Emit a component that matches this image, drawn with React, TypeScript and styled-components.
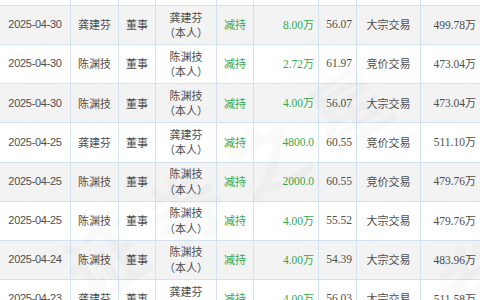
import React from "react";
import styled, { createGlobalStyle } from "styled-components";

const GlobalStyle = createGlobalStyle`
  html, body { margin: 0; padding: 0; background: #ffffff; overflow: hidden; }
  * { box-sizing: border-box; }
`;

const COLS = "71px 48px 37px 61px 37px 65px 38px 64px 60px";
const BORDER = "#d3e2f2";
const TEXT = "#4e4e4e";
const GREEN = "#36a94f";
const CJK = `"Noto Sans CJK SC", "Liberation Sans", sans-serif`;

const Viewport = styled.div`
  position: relative;
  width: 480px;
  height: 300px;
  overflow: hidden;
  background: #fff;
`;

const Body = styled.div`
  margin-top: -33.15px;
  width: 481px;
`;

const Row = styled.div<{ $alt: boolean }>`
  display: grid;
  grid-template-columns: ${COLS};
  height: 39.15px;
  background: ${(p) => (p.$alt ? "#f3f3f3" : "#ffffff")};
`;

const Cell = styled.div<{ $align?: "center" | "right" }>`
  display: flex;
  flex-direction: column;
  justify-content: center;
  align-items: ${(p) => (p.$align === "right" ? "flex-end" : "center")};
  padding: 0 4px;
  border-right: 1px solid ${BORDER};
  border-bottom: 1px solid ${BORDER};
  font-family: ${CJK};
  font-size: 11px;
  line-height: 15.5px;
  color: ${TEXT};
  white-space: nowrap;
  overflow: hidden;
`;

const DateText = styled.span`
  font-family: "Liberation Sans", Arial, sans-serif;
  font-size: 11px;
  letter-spacing: -0.3px;
`;

const Num = styled.span<{ $green?: boolean }>`
  font-family: "Liberation Serif", "Noto Sans CJK SC", serif;
  font-size: 11.5px;
  color: ${(p) => (p.$green ? GREEN : TEXT)};
`;

const Unit = styled.span`
  font-family: ${CJK};
  font-size: 11px;
`;

const Action = styled.span`
  color: ${GREEN};
`;

const Watermark = styled.div<{ $x: number; $y: number }>`
  position: absolute;
  left: ${(p) => p.$x}px;
  top: ${(p) => p.$y}px;
  transform: rotate(-32deg);
  transform-origin: left top;
  font-family: ${CJK};
  font-size: 78px;
  font-weight: 700;
  letter-spacing: 18px;
  color: rgba(0, 0, 0, 0.02);
  white-space: nowrap;
  pointer-events: none;
`;

type Trade = {
  date: string;
  name: string;
  role: string;
  relation: string;
  action: string;
  amount: string;
  price: string;
  kind: string;
  holding: string;
};

const trades: Trade[] = [
  { date: "2025-05-06", name: "陈渊技", role: "董事", relation: "陈渊技", action: "减持", amount: "2.00万", price: "57.10", kind: "竞价交易", holding: "499.78万" },
  { date: "2025-04-30", name: "龚建芬", role: "董事", relation: "龚建芬", action: "减持", amount: "8.00万", price: "56.07", kind: "大宗交易", holding: "499.78万" },
  { date: "2025-04-30", name: "陈渊技", role: "董事", relation: "陈渊技", action: "减持", amount: "2.72万", price: "61.97", kind: "竞价交易", holding: "473.04万" },
  { date: "2025-04-30", name: "陈渊技", role: "董事", relation: "陈渊技", action: "减持", amount: "4.00万", price: "56.07", kind: "大宗交易", holding: "473.04万" },
  { date: "2025-04-25", name: "龚建芬", role: "董事", relation: "龚建芬", action: "减持", amount: "4800.0", price: "60.55", kind: "竞价交易", holding: "511.10万" },
  { date: "2025-04-25", name: "陈渊技", role: "董事", relation: "陈渊技", action: "减持", amount: "2000.0", price: "60.55", kind: "竞价交易", holding: "479.76万" },
  { date: "2025-04-25", name: "陈渊技", role: "董事", relation: "陈渊技", action: "减持", amount: "4.00万", price: "55.52", kind: "大宗交易", holding: "479.76万" },
  { date: "2025-04-24", name: "陈渊技", role: "董事", relation: "陈渊技", action: "减持", amount: "4.00万", price: "54.39", kind: "大宗交易", holding: "483.96万" },
  { date: "2025-04-23", name: "龚建芬", role: "董事", relation: "龚建芬", action: "减持", amount: "4.00万", price: "56.03", kind: "大宗交易", holding: "511.58万" },
];

const Amount = ({ value, green }: { value: string; green?: boolean }) => {
  const hasUnit = value.endsWith("万");
  const num = hasUnit ? value.slice(0, -1) : value;
  return (
    <Num $green={green}>
      {num}
      {hasUnit && <Unit>万</Unit>}
    </Num>
  );
};

export default function App() {
  return (
    <>
      <GlobalStyle />
      <Viewport>
        <Body>
          {trades.map((t, i) => (
            <Row key={i} $alt={i % 2 === 1}>
              <Cell>
                <DateText>{t.date}</DateText>
              </Cell>
              <Cell>{t.name}</Cell>
              <Cell>{t.role}</Cell>
              <Cell>
                <span>{t.relation}</span>
                <span>（本人）</span>
              </Cell>
              <Cell>
                <Action>{t.action}</Action>
              </Cell>
              <Cell $align="right">
                <Amount value={t.amount} green />
              </Cell>
              <Cell $align="right">
                <Num>{t.price}</Num>
              </Cell>
              <Cell>{t.kind}</Cell>
              <Cell $align="right">
                <Amount value={t.holding} />
              </Cell>
            </Row>
          ))}
        </Body>
        <Watermark $x={40} $y={230}>证券之星</Watermark>
        <Watermark $x={330} $y={300}>证券之星</Watermark>
      </Viewport>
    </>
  );
}
